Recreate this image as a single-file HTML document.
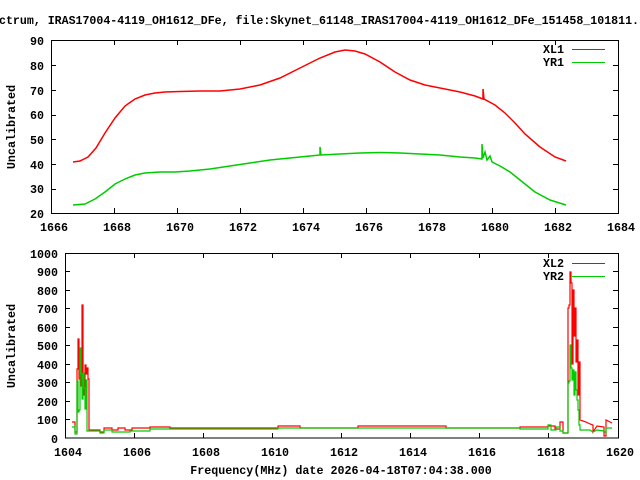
<!DOCTYPE html>
<html><head><meta charset="utf-8"><style>
html,body{margin:0;padding:0;background:#fff;width:640px;height:480px;overflow:hidden}
svg text{font-family:"Liberation Mono",monospace;font-weight:bold;font-size:11.7px;fill:#000}
</style></head><body>
<svg width="640" height="480" xmlns="http://www.w3.org/2000/svg">
<text x="-1" y="24" textLength="640" lengthAdjust="spacingAndGlyphs">ctrum, IRAS17004-4119_OH1612_DFe, file:Skynet_61148_IRAS17004-4119_OH1612_DFe_151458_101811.</text>

<rect x="51.5" y="40.5" width="567" height="173" fill="none" stroke="#000" stroke-width="1"/>
<g stroke="#000" stroke-width="1">
<path d="M51 65.5h5M51 90.5h5M51 115.5h5M51 139.5h5M51 164.5h5M51 189.5h5M618 65.5h-5M618 90.5h-5M618 115.5h-5M618 139.5h-5M618 164.5h-5M618 189.5h-5"/>
<path d="M114.5 213v-5M177.5 213v-5M240.5 213v-5M303.5 213v-5M366.5 213v-5M429.5 213v-5M492.5 213v-5M555.5 213v-5M114.5 40v5M177.5 40v5M240.5 40v5M303.5 40v5M366.5 40v5M429.5 40v5M492.5 40v5M555.5 40v5"/>
</g>
<g text-anchor="end">
<text x="44" y="45">90</text><text x="44" y="70">80</text><text x="44" y="95">70</text><text x="44" y="119">60</text><text x="44" y="144">50</text><text x="44" y="169">40</text><text x="44" y="193">30</text><text x="44" y="218">20</text>
</g>
<g text-anchor="middle">
<text x="54" y="231">1666</text><text x="117" y="231">1668</text><text x="180" y="231">1670</text><text x="243" y="231">1672</text><text x="306" y="231">1674</text><text x="369" y="231">1676</text><text x="432" y="231">1678</text><text x="495" y="231">1680</text><text x="558" y="231">1682</text><text x="621" y="231">1684</text>
</g>
<text transform="translate(15,127) rotate(-90)" text-anchor="middle">Uncalibrated</text>
<text x="564" y="53" text-anchor="end">XL1</text>
<text x="564" y="66" text-anchor="end">YR1</text>
<path d="M572 49.5h33" stroke="#f00" stroke-width="1"/>
<path d="M572 62.5h33" stroke="#0c0" stroke-width="1"/>
<polyline fill="none" stroke="#f00" stroke-width="1.5" points="73,162 80,161 88,157 96,148 105,133 115,118 125,106 135,99 145,95 155,93 165,92 180,91.5 200,91 220,91 240,89 260,85 280,78 300,68 320,58 335,52 345,50 355,51 365,54 380,62 395,72 410,80 425,85 440,88 460,92 475,96 483,99 483,89 484,99 495,105 505,113 515,123 525,134 540,147 555,157 566,161"/>
<polyline fill="none" stroke="#0c0" stroke-width="1.5" points="73,205 85,204 95,199 105,192 115,184 125,179 135,175 145,173 160,172 175,172 190,171 210,169 230,166 250,163 270,160 290,158 310,156 320,155 320,147 321,155 340,154 360,153 380,152.5 400,153 420,154 440,155 460,157 475,158 482,159 482,144 483,158 485,152 487,160 490,156 492,162 500,166 510,172 520,180 535,192 550,200 566,205"/>

<rect x="65.5" y="253.5" width="553" height="184.5" fill="none" stroke="#000" stroke-width="1"/>
<g stroke="#000" stroke-width="1">
<path d="M65 419.5h5M65 401.5h5M65 382.5h5M65 364.5h5M65 345.5h5M65 327.5h5M65 308.5h5M65 290.5h5M65 271.5h5M618 419.5h-5M618 401.5h-5M618 382.5h-5M618 364.5h-5M618 345.5h-5M618 327.5h-5M618 308.5h-5M618 290.5h-5M618 271.5h-5"/>
<path d="M134.5 438v-5M203.5 438v-5M272.5 438v-5M341.5 438v-5M410.5 438v-5M479.5 438v-5M548.5 438v-5M134.5 253v5M203.5 253v5M272.5 253v5M341.5 253v5M410.5 253v5M479.5 253v5M548.5 253v5"/>
</g>
<g text-anchor="end">
<text x="58" y="258">1000</text><text x="58" y="276">900</text><text x="58" y="295">800</text><text x="58" y="313">700</text><text x="58" y="332">600</text><text x="58" y="350">500</text><text x="58" y="369">400</text><text x="58" y="387">300</text><text x="58" y="406">200</text><text x="58" y="424">100</text><text x="58" y="443">0</text>
</g>
<g text-anchor="middle">
<text x="68" y="456">1604</text><text x="137" y="456">1606</text><text x="206" y="456">1608</text><text x="275" y="456">1610</text><text x="344" y="456">1612</text><text x="413" y="456">1614</text><text x="482" y="456">1616</text><text x="551" y="456">1618</text><text x="620" y="456">1620</text>
</g>
<text transform="translate(15,346) rotate(-90)" text-anchor="middle">Uncalibrated</text>
<text x="341" y="474" text-anchor="middle">Frequency(MHz) date 2026-04-18T07:04:38.000</text>
<text x="564" y="267" text-anchor="end">XL2</text>
<text x="564" y="280" text-anchor="end">YR2</text>
<path d="M572 263.5h33" stroke="#f00" stroke-width="1"/>
<path d="M572 276.5h33" stroke="#0c0" stroke-width="1"/>
<polyline fill="none" stroke="#f00" stroke-width="1.2" points="72,422 75,422 75,432 77,432 77,369 78,369 78,339 79,339 79,379 80,379 80,362 81,362 81,386 82,386 82,305 83,305 83,374 84,374 84,395 85,395 85,365 86,365 86,374 87,374 87,368 88,368 88,379 89,379 89,430 100,430 100,432 104,432 104,428 112,428 112,430 118,430 118,428 125,428 125,430 132,430 132,428 140,428 140,428 150,428 150,427 170,427 170,428 200,428 278,428 278,426 300,426 300,428 358,428 358,426 446,426 446,428 520,428 520,427 548,427 548,426 555,426 555,429 560,429 560,422 563,422 563,433 568,433 568,308 569,308 569,305 570,305 570,272 571,272 571,283 572,283 572,364 573,364 573,290 574,290 574,336 575,336 575,308 576,308 576,362 577,362 577,340 578,340 578,395 579,395 579,362 580,362 580,420 586,422 590,424 593,425 593,432 597,426 604,427 604,436 606,436 606,420 612,423"/>
<polyline fill="none" stroke="#0c0" stroke-width="1.2" points="72,427 75,427 75,434 77,434 77,381 78,381 78,412 79,412 79,410 80,410 80,348 81,348 81,374 82,374 82,399 83,399 83,373 84,373 84,388 85,388 85,409 86,409 86,380 87,380 87,431 100,431 100,433 104,433 104,430 112,430 112,432 130,432 130,431 150,431 150,429 200,429 278,429 278,428 520,428 520,429 548,429 548,425 551,425 551,430 556,430 556,427 560,427 560,431 563,431 563,433 568,433 568,383 569,383 569,381 570,381 570,345 571,345 571,368 572,368 572,380 573,380 573,370 574,370 574,395 575,395 575,372 576,372 576,390 577,390 577,400 578,400 578,410 579,410 579,425 580,425 580,430 590,430 593,432 597,430 604,431 606,433 606,428 612,428"/>
</svg>
</body></html>
